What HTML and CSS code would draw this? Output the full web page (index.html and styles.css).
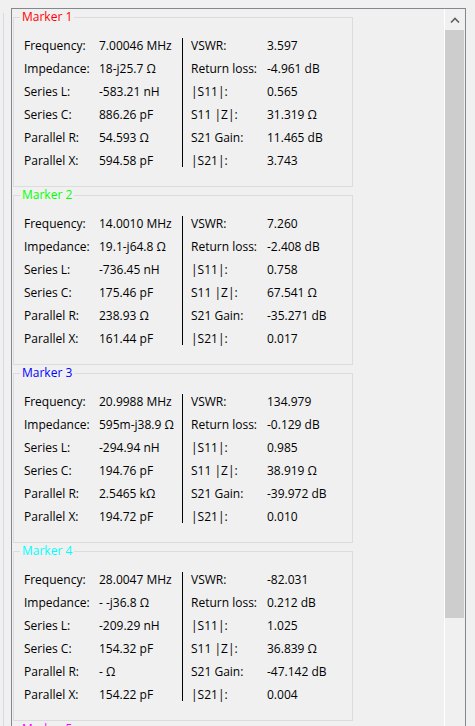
FILE: index.html
```html
<!DOCTYPE html>
<html>
<head>
<meta charset="utf-8">
<link rel="stylesheet" href="styles.css">
</head>
<body>
<div class="page">
  <div class="strip"><div class="strip-line"></div></div>
  <div class="frame">
    <div class="content">
      <fieldset class="marker">
        <legend class="m1">Marker 1</legend>
        <div class="mk-body">
          <div class="col left">
            <div class="row"><span class="lbl">Frequency:</span><span class="val">7.00046 MHz</span></div>
            <div class="row"><span class="lbl">Impedance:</span><span class="val">18-j25.7 Ω</span></div>
            <div class="row"><span class="lbl">Series L:</span><span class="val">-583.21 nH</span></div>
            <div class="row"><span class="lbl">Series C:</span><span class="val">886.26 pF</span></div>
            <div class="row"><span class="lbl">Parallel R:</span><span class="val">54.593 Ω</span></div>
            <div class="row"><span class="lbl">Parallel X:</span><span class="val">594.58 pF</span></div>
          </div>
          <div class="sep"></div>
          <div class="col right">
            <div class="row"><span class="lbl">VSWR:</span><span class="val">3.597</span></div>
            <div class="row"><span class="lbl">Return loss:</span><span class="val">-4.961 dB</span></div>
            <div class="row"><span class="lbl">|S11|:</span><span class="val">0.565</span></div>
            <div class="row"><span class="lbl">S11 |Z|:</span><span class="val">31.319 Ω</span></div>
            <div class="row"><span class="lbl">S21 Gain:</span><span class="val">11.465 dB</span></div>
            <div class="row"><span class="lbl">|S21|:</span><span class="val">3.743</span></div>
          </div>
        </div>
      </fieldset>
      <fieldset class="marker">
        <legend class="m2">Marker 2</legend>
        <div class="mk-body">
          <div class="col left">
            <div class="row"><span class="lbl">Frequency:</span><span class="val">14.0010 MHz</span></div>
            <div class="row"><span class="lbl">Impedance:</span><span class="val">19.1-j64.8 Ω</span></div>
            <div class="row"><span class="lbl">Series L:</span><span class="val">-736.45 nH</span></div>
            <div class="row"><span class="lbl">Series C:</span><span class="val">175.46 pF</span></div>
            <div class="row"><span class="lbl">Parallel R:</span><span class="val">238.93 Ω</span></div>
            <div class="row"><span class="lbl">Parallel X:</span><span class="val">161.44 pF</span></div>
          </div>
          <div class="sep"></div>
          <div class="col right">
            <div class="row"><span class="lbl">VSWR:</span><span class="val">7.260</span></div>
            <div class="row"><span class="lbl">Return loss:</span><span class="val">-2.408 dB</span></div>
            <div class="row"><span class="lbl">|S11|:</span><span class="val">0.758</span></div>
            <div class="row"><span class="lbl">S11 |Z|:</span><span class="val">67.541 Ω</span></div>
            <div class="row"><span class="lbl">S21 Gain:</span><span class="val">-35.271 dB</span></div>
            <div class="row"><span class="lbl">|S21|:</span><span class="val">0.017</span></div>
          </div>
        </div>
      </fieldset>
      <fieldset class="marker">
        <legend class="m3">Marker 3</legend>
        <div class="mk-body">
          <div class="col left">
            <div class="row"><span class="lbl">Frequency:</span><span class="val">20.9988 MHz</span></div>
            <div class="row"><span class="lbl">Impedance:</span><span class="val">595m-j38.9 Ω</span></div>
            <div class="row"><span class="lbl">Series L:</span><span class="val">-294.94 nH</span></div>
            <div class="row"><span class="lbl">Series C:</span><span class="val">194.76 pF</span></div>
            <div class="row"><span class="lbl">Parallel R:</span><span class="val">2.5465 kΩ</span></div>
            <div class="row"><span class="lbl">Parallel X:</span><span class="val">194.72 pF</span></div>
          </div>
          <div class="sep"></div>
          <div class="col right">
            <div class="row"><span class="lbl">VSWR:</span><span class="val">134.979</span></div>
            <div class="row"><span class="lbl">Return loss:</span><span class="val">-0.129 dB</span></div>
            <div class="row"><span class="lbl">|S11|:</span><span class="val">0.985</span></div>
            <div class="row"><span class="lbl">S11 |Z|:</span><span class="val">38.919 Ω</span></div>
            <div class="row"><span class="lbl">S21 Gain:</span><span class="val">-39.972 dB</span></div>
            <div class="row"><span class="lbl">|S21|:</span><span class="val">0.010</span></div>
          </div>
        </div>
      </fieldset>
      <fieldset class="marker">
        <legend class="m4">Marker 4</legend>
        <div class="mk-body">
          <div class="col left">
            <div class="row"><span class="lbl">Frequency:</span><span class="val">28.0047 MHz</span></div>
            <div class="row"><span class="lbl">Impedance:</span><span class="val">- -j36.8 Ω</span></div>
            <div class="row"><span class="lbl">Series L:</span><span class="val">-209.29 nH</span></div>
            <div class="row"><span class="lbl">Series C:</span><span class="val">154.32 pF</span></div>
            <div class="row"><span class="lbl">Parallel R:</span><span class="val">- Ω</span></div>
            <div class="row"><span class="lbl">Parallel X:</span><span class="val">154.22 pF</span></div>
          </div>
          <div class="sep"></div>
          <div class="col right">
            <div class="row"><span class="lbl">VSWR:</span><span class="val">-82.031</span></div>
            <div class="row"><span class="lbl">Return loss:</span><span class="val">0.212 dB</span></div>
            <div class="row"><span class="lbl">|S11|:</span><span class="val">1.025</span></div>
            <div class="row"><span class="lbl">S11 |Z|:</span><span class="val">36.839 Ω</span></div>
            <div class="row"><span class="lbl">S21 Gain:</span><span class="val">-47.142 dB</span></div>
            <div class="row"><span class="lbl">|S21|:</span><span class="val">0.004</span></div>
          </div>
        </div>
      </fieldset>
      <fieldset class="marker">
        <legend class="m5">Marker 5</legend>
        <div class="mk-body">
          <div class="col left">
            <div class="row"><span class="lbl">Frequency:</span><span class="val"></span></div>
          </div>
          <div class="sep"></div>
          <div class="col right">
            <div class="row"><span class="lbl">VSWR:</span><span class="val"></span></div>
          </div>
        </div>
      </fieldset>
    </div>
    <div class="scrollbar">
      <div class="sb-btn">
        <svg width="10" height="6" viewBox="0 0 10 6"><path d="M1 5.5 L5 1.5 L9 5.5" fill="none" stroke="#606060" stroke-width="1.6"/></svg>
      </div>
      <div class="sb-thumb"></div>
    </div>
  </div>
</div>
</body>
</html>
```

FILE: styles.css
```css
html, body {
  margin: 0;
  padding: 0;
}
body {
  background: #f0f0f0;
  width: 475px;
  height: 726px;
  overflow: hidden;
  font-family: "Open Sans", "Liberation Sans", sans-serif;
  font-size: 12px;
  color: #000;
}
.page {
  display: flex;
  height: 726px;
}
.strip {
  width: 11px;
  flex: none;
  padding-top: 13px;
  box-sizing: border-box;
}
.strip-line {
  margin-left: 3px;
  width: 1px;
  height: 100%;
  background: #dadada;
}
.frame {
  margin-top: 8px;
  width: 455px;
  flex: none;
  box-sizing: border-box;
  border: 1px solid #828790;
  border-bottom: none;
  display: flex;
  height: 740px;
}
.content {
  flex: 1;
  padding: 1px 0 0 1px;
  overflow: hidden;
}
.marker {
  width: 340px;
  box-sizing: border-box;
  margin: 0 0 1px 0;
  padding: 0 6px 14px 6px;
  border: 1px solid #dcdcdc;
  min-width: 0;
}
.marker legend {
  padding: 0 2px;
  line-height: 14px;
  font-size: 12px;
}
.m1 { color: #ff0000; }
.m2 { color: #00ff00; }
.m3 { color: #0000ff; }
.m4 { color: #00ffff; }
.m5 { color: #ff00ff; }
.mk-body {
  display: flex;
  padding: 10px 0 0 4px;
}
.col.left {
  width: 158px;
}
.col.right {
  padding-left: 8px;
}
.sep {
  width: 1px;
  background: #000;
  margin: 4px 0 5px 0;
}
.row {
  display: flex;
  height: 23px;
  line-height: 23px;
  white-space: nowrap;
}
.left .lbl {
  width: 75px;
  flex: none;
}
.left .val {
  flex: 1;
  overflow: hidden;
}
.right .lbl {
  width: 76px;
  flex: none;
}
.scrollbar {
  width: 20px;
  flex: none;
  border-left: 1px solid #ffffff;
  background: #f0f0f0;
  display: flex;
  flex-direction: column;
}
.sb-btn {
  height: 21px;
  display: flex;
  align-items: center;
  justify-content: center;
  padding-right: 1px;
}
.sb-thumb {
  margin-right: 1px;
  height: 588px;
  background: #cdcdcd;
}
```
